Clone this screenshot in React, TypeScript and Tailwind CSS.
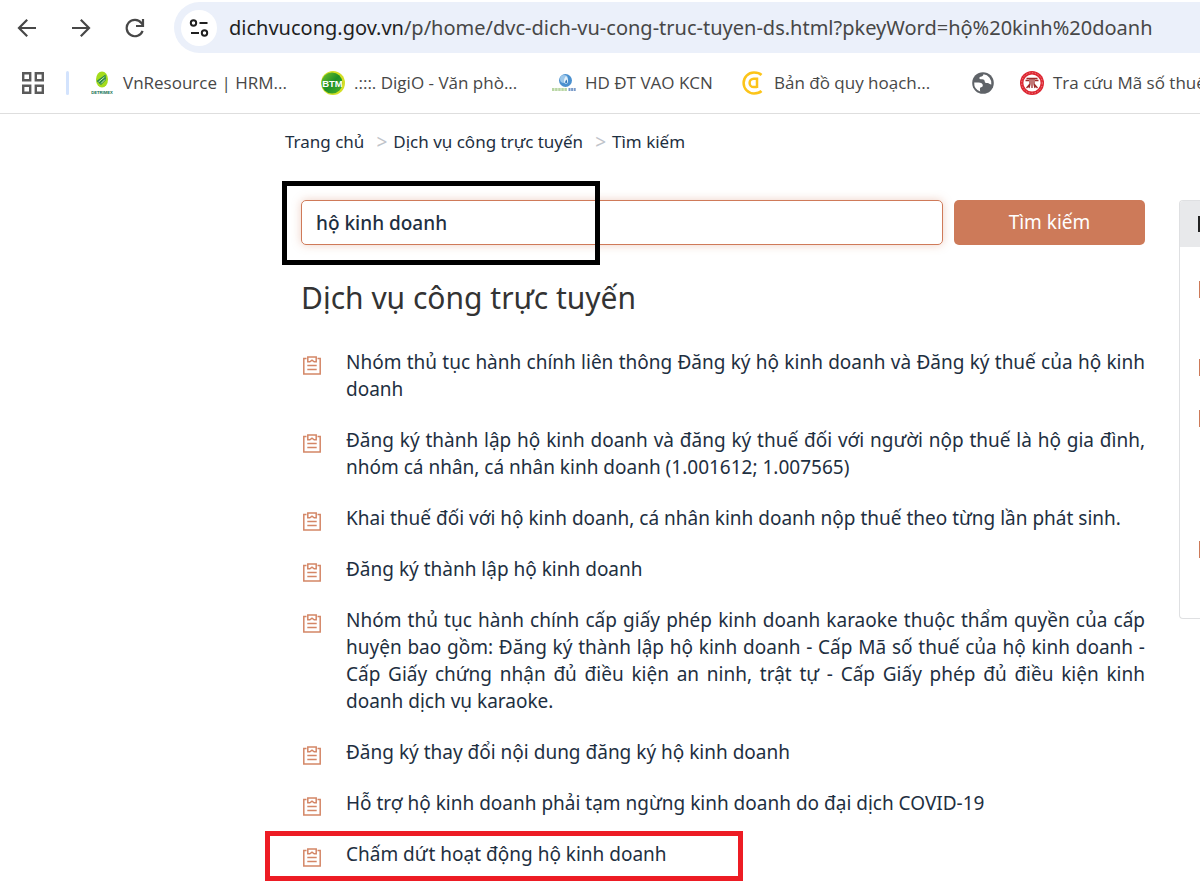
import React from "react";

const services = [
  "Nhóm thủ tục hành chính liên thông Đăng ký hộ kinh doanh và Đăng ký thuế của hộ kinh doanh",
  "Đăng ký thành lập hộ kinh doanh và đăng ký thuế đối với người nộp thuế là hộ gia đình, nhóm cá nhân, cá nhân kinh doanh (1.001612; 1.007565)",
  "Khai thuế đối với hộ kinh doanh, cá nhân kinh doanh nộp thuế theo từng lần phát sinh.",
  "Đăng ký thành lập hộ kinh doanh",
  "Nhóm thủ tục hành chính cấp giấy phép kinh doanh karaoke thuộc thẩm quyền của cấp huyện bao gồm: Đăng ký thành lập hộ kinh doanh - Cấp Mã số thuế của hộ kinh doanh - Cấp Giấy chứng nhận đủ điều kiện an ninh, trật tự - Cấp Giấy phép đủ điều kiện kinh doanh dịch vụ karaoke.",
  "Đăng ký thay đổi nội dung đăng ký hộ kinh doanh",
  "Hỗ trợ hộ kinh doanh phải tạm ngừng kinh doanh do đại dịch COVID-19",
  "Chấm dứt hoạt động hộ kinh doanh",
];

function ClipboardIcon() {
  return (
    <svg className="mt-[7px] h-[19px] w-[18px] shrink-0" viewBox="0 0 18 19" fill="none" stroke="#d48666" strokeWidth="1.5" aria-hidden="true">
      <path d="M3.500 2.500H.8V18H17.200V2.500H14.500" />
      <path d="M4.800 5.800V.9h8.400v4.900h-2L9 4.200 6.800 5.800z" />
      <path d="M4.300 9.500h9.400M4.300 13.500h9.400" />
    </svg>
  );
}

function BackIcon() {
  return (
    <svg className="size-[20px]" viewBox="0 0 20 20" fill="none" stroke="#474747" strokeWidth="2.2" aria-hidden="true">
      <path d="M19 10H2.4M10.2 1.8 2 10l8.2 8.2" />
    </svg>
  );
}

function ForwardIcon() {
  return (
    <svg className="size-[20px]" viewBox="0 0 20 20" fill="none" stroke="#474747" strokeWidth="2.2" aria-hidden="true">
      <path d="M1 10h16.600M9.800 1.800 18 10l-8.200 8.200" />
    </svg>
  );
}

function ReloadIcon() {
  return (
    <svg className="size-[20px]" viewBox="0 0 20 20" fill="none" stroke="#474747" strokeWidth="2.2" aria-hidden="true">
      <path d="M17.600 12.800A8.200 8.200 0 1 1 16.400 5l1.800 2.200" />
      <path d="M18 1v7h-7" />
    </svg>
  );
}

function TuneIcon() {
  return (
    <svg className="size-[20px]" viewBox="0 0 20 20" fill="none" stroke="#1f1f1f" strokeWidth="2" aria-hidden="true">
      <circle cx="4.500" cy="5" r="2.700" />
      <path d="M10.500 5h8M2 15h8" />
      <circle cx="15.500" cy="15" r="2.700" />
    </svg>
  );
}

function AppsIcon() {
  return (
    <svg className="size-[22px]" viewBox="0 0 22 22" fill="none" stroke="#5a5a5a" strokeWidth="2.400" aria-hidden="true">
      <path d="M1.200 1.200h7v7h-7zM13.800 1.200h7v7h-7zM1.200 13.800h7v7h-7zM13.800 13.800h7v7h-7z" />
    </svg>
  );
}

function LeafLogo() {
  return (
    <svg className="size-[24px]" viewBox="0 0 24 24" aria-hidden="true">
      <ellipse cx="12" cy="8.500" rx="6" ry="8" fill="#a4dc1c" />
      <path d="M6.500 10 15.500 3.500 16 9l-5 5z" fill="#2b8a4a" />
      <path d="M8.500 11l6-5M11 12.500l4-4" stroke="#d7efb0" strokeWidth="1" />
      <text x="12" y="22.500" textAnchor="middle" fontSize="4.200" fontWeight="700" fill="#0c6b4f" fontFamily="Liberation Sans, sans-serif">DETRIMEX</text>
    </svg>
  );
}

function BtmLogo() {
  return (
    <svg className="size-[24px]" viewBox="0 0 24 24" aria-hidden="true">
      <defs>
        <linearGradient id="btm" x1="0" y1="0" x2="1" y2="1">
          <stop offset="0" stopColor="#79c62a" />
          <stop offset=".5" stopColor="#1f8f27" />
          <stop offset="1" stopColor="#4db32b" />
        </linearGradient>
      </defs>
      <circle cx="12" cy="12" r="12" fill="#d3df25" />
      <circle cx="11" cy="12" r="10.500" fill="url(#btm)" />
      <text x="11.500" y="15.500" textAnchor="middle" fontSize="9.500" fontWeight="700" fill="#fff" fontFamily="Liberation Sans, sans-serif">BTM</text>
    </svg>
  );
}

function GlobeWaterLogo() {
  return (
    <svg className="size-[24px]" viewBox="0 0 24 24" aria-hidden="true">
      <circle cx="13.500" cy="9.500" r="6.500" fill="#4a90cf" />
      <circle cx="12" cy="8" r="4" fill="#9cc7ea" />
      <path d="M14 5c2.500 3 3 7 0 8-3-1-2.500-5 0-8z" fill="#e4f1fb" />
      <path d="M14.500 8.500c1 2 .8 3.500-.5 4-1.300-.5-1-2.500.5-4z" fill="#2f74b5" />
      <path d="M0 18.500h15" stroke="#b9d6a4" strokeWidth="3" strokeDasharray="2.500 .6" />
      <path d="M16.500 18.500H24" stroke="#7a9bc9" strokeWidth="3" strokeDasharray="2 .6" />
    </svg>
  );
}

function MapLogo() {
  return (
    <svg className="size-[24px]" viewBox="0 0 24 24" fill="none" stroke="#fcc419" strokeWidth="2.500" aria-hidden="true">
      <path d="M20.500 4C18.800 2.300 16.500 1.600 13 1.600a10.400 10.400 0 0 0 0 20.800c3.500 0 5.800-.7 7.500-2.400" />
      <path d="M16 6.500v10.500M16 7.800h-3.300a4 4 0 0 0 0 8.200H16" />
    </svg>
  );
}

function WorldIcon() {
  return (
    <svg className="size-[22px]" viewBox="0 0 22 22" aria-hidden="true">
      <circle cx="11" cy="11" r="10.800" fill="#5f6368" />
      <path d="M11.500 2.300c-.3 1.700-1.200 2.200-3 2.400-1.600.2-1.500 2.500.2 2.600 2 .2 3.800 0 4 1.900.2 1.700 1.300 2 2.800 1.900 1.700-.1 1.700 1.500 3.800 1.300A8.900 8.900 0 0 0 11.500 2.300z" fill="#fff" />
      <path d="M2.200 10.500h4.300c2.500 0 4.500 1 4.300 3-.1 1.500-1.500 1.500-2.300 2-.8.600-.6 2.200-.3 3.900A8.900 8.900 0 0 1 2.200 10.500z" fill="#fff" />
    </svg>
  );
}

function TaxLogo() {
  return (
    <svg className="size-[24px]" viewBox="0 0 24 24" aria-hidden="true">
      <circle cx="12" cy="12" r="12" fill="#dc2430" />
      <circle cx="12" cy="12" r="8.600" fill="#fff" />
      <circle cx="12" cy="12" r="10.300" fill="none" stroke="#f19a9a" strokeWidth=".8" strokeDasharray="1.500 1.500" />
      <path d="M6.500 7.500h11M5.500 9.500h3.500M15 9.500h3.500M10 8v5L6.500 17M12 8v9M14 8v5l3.500 4M10 13l-1 4M14 13l1 4" fill="none" stroke="#9c2a2a" strokeWidth="1.300" />
    </svg>
  );
}

const bookmarks = [
  { label: "VnResource | HRM...", icon: <LeafLogo />, box: "w-[231px]" },
  { label: ".:::. DigiO - Văn phò...", icon: <BtmLogo />, box: "w-[231px]" },
  { label: "HD ĐT VAO KCN", icon: <GlobeWaterLogo />, box: "w-[189px]" },
  { label: "Bản đồ quy hoạch...", icon: <MapLogo />, box: "w-[231px]" },
  { label: "", icon: <WorldIcon />, box: "w-[48px]" },
  { label: "Tra cứu Mã số thuế", icon: <TaxLogo />, box: "w-[231px]" },
];

function Browser() {
  return (
    <header className="border-b border-[#dedede] font-['Open_Sans','Noto_Sans',sans-serif]">
      <div className="flex items-center pt-0.5 pl-[17px]">
        <div className="flex w-[157px] gap-[34px]">
          <button type="button" aria-label="Back"><BackIcon /></button>
          <button type="button" aria-label="Forward"><ForwardIcon /></button>
          <button type="button" aria-label="Reload"><ReloadIcon /></button>
        </div>
        <div className="flex h-[51px] min-w-0 flex-1 items-center gap-[12px] overflow-hidden rounded-l-full bg-[#ebf0fa] pl-[7px]">
          <button type="button" aria-label="Site information" className="flex size-9 shrink-0 items-center justify-center rounded-full bg-white">
            <TuneIcon />
          </button>
          <p className="font-['Noto_Sans',sans-serif] text-[20px] whitespace-nowrap text-[#474747]">
            <span className="text-[#1f1f1f]">dichvucong.gov.vn</span>/p/home/dvc-dich-vu-cong-truc-tuyen-ds.html?pkeyWord=hộ%20kinh%20doanh
          </p>
        </div>
      </div>
      <nav aria-label="Bookmarks" className="flex h-[60px] items-center overflow-hidden pl-[22px] text-[17px] text-[#474747]">
        <button type="button" aria-label="Apps" className="shrink-0"><AppsIcon /></button>
        <span className="mr-[21px] ml-[22px] h-6 w-[3px] shrink-0 rounded-full bg-[#d3e3fd]" />
        {bookmarks.map((b) => (
          <a key={b.label} href="#" aria-label={b.label || "Web page"} className={`flex shrink-0 items-center gap-[9px] whitespace-nowrap ${b.box}`}>
            {b.icon}
            {b.label}
          </a>
        ))}
      </nav>
    </header>
  );
}

export default function App() {
  return (
    <div className="min-h-screen overflow-hidden bg-white font-['Noto_Sans',sans-serif] text-[#1e2f41]">
      <Browser />
      <main className="pl-[285px]">
        <nav aria-label="Breadcrumb" className="flex h-14 items-center text-[17px] whitespace-nowrap">
          <a href="#">Trang chủ</a>
          <span className="mr-[6px] ml-[12px] text-[19px] text-[#bfc4ca]">&gt;</span>
          <a href="#">Dịch vụ công trực tuyến</a>
          <span className="mr-[6px] ml-[12px] text-[19px] text-[#bfc4ca]">&gt;</span>
          <a href="#">Tìm kiếm</a>
        </nav>
        <div className="flex items-start gap-[34px] pt-[30px]">
          <section className="min-w-0 flex-1 pl-4">
            <form className="relative flex gap-[11px]" onSubmit={(e) => e.preventDefault()}>
              <input
                aria-label="Từ khóa tìm kiếm"
                defaultValue="hộ kinh doanh"
                className="h-[45px] min-w-0 flex-1 rounded-[5px] border border-[#cf7a59] px-[14px] text-[19px] font-medium shadow-[0_0_10px_rgba(207,122,89,0.35)] outline-none"
              />
              <button type="submit" className="h-[45px] w-[191px] rounded-[5px] bg-[#cd7a59] text-[19px] text-white">Tìm kiếm</button>
              <span className="pointer-events-none absolute -top-[19px] -left-[19px] h-[84px] w-[318px] border-5 border-black" />
            </form>
            <h1 className="mt-[32px] text-[30px] leading-[42px] text-[#333]">Dịch vụ công trực tuyến</h1>
            <ul className="mt-[30px] flex flex-col gap-[24px] text-[19px] leading-[27px]">
              {services.map((s, i) => (
                <li key={s} className="relative flex gap-[25px] pl-0.5">
                  <ClipboardIcon />
                  <a href="#" className="flex-1 text-justify">{s}</a>
                  {i === services.length - 1 && (
                    <span className="pointer-events-none absolute -top-[10px] -left-[36px] h-[50px] w-[478px] border-5 border-[#ed1c24]" />
                  )}
                </li>
              ))}
            </ul>
          </section>
          <aside className="h-[419px] w-[21px] shrink-0 overflow-hidden rounded-l-[4px] border border-r-0 border-[#dfe0e2]">
            <div className="flex h-[46px] items-center justify-end bg-[#e8e9eb]">
              <span className="h-4 w-0.5 bg-[#222]" />
            </div>
            <div className="flex flex-col items-end">
              <span className="mt-[34px] h-[17px] w-px bg-[#cd7a59]" />
              <span className="mt-[61px] h-[17px] w-px bg-[#cd7a59]" />
              <span className="mt-[34px] h-[17px] w-px bg-[#cd7a59]" />
              <span className="mt-[114px] h-[17px] w-px bg-[#cd7a59]" />
            </div>
          </aside>
        </div>
      </main>
    </div>
  );
}
